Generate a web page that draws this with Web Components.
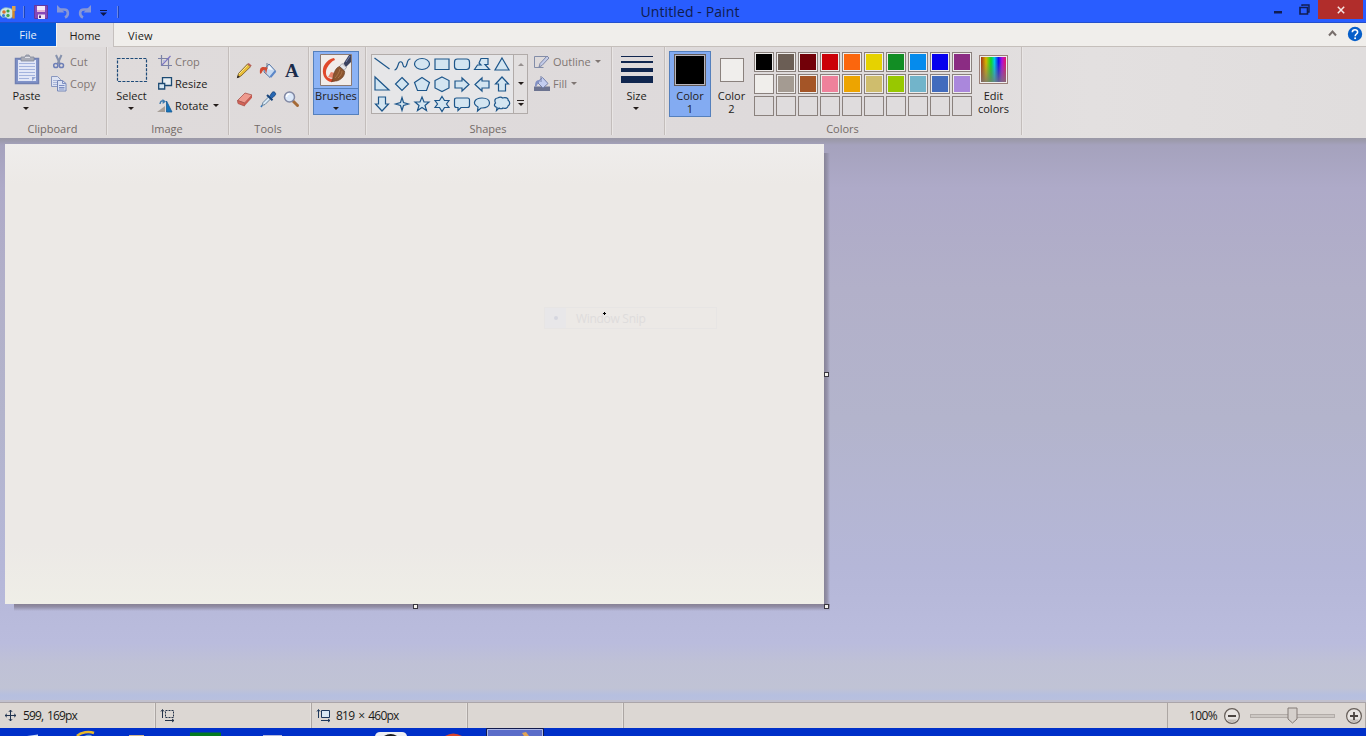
<!DOCTYPE html>
<html lang="en">
<head>
<meta charset="utf-8">
<title>Untitled - Paint</title>
<style>
  html, body { margin: 0; height: 100%; overflow: hidden; }
  body { font-family: "Open Sans", "Noto Sans", sans-serif; font-size: 11px; color: #231c1a; }
</style>
</head>
<body>
<paint-app></paint-app>

<script>
// [width, height, markup]
const ICONS = {
  palette: [18, 18, `<path d="M0 11c0-5 4-7 8-6 5 0 6 4 5 7-1 4-4 4-6 3-1-2-3 0-5-1-1-1-2-2-2-3z" fill="#cfe6e6" stroke="#8cbcc4" stroke-width=".8"/><circle cx="4" cy="9" r="1.800" fill="#d5732e"/><circle cx="8" cy="8" r="1.600" fill="#35a046"/><circle cx="3.500" cy="12.500" r="1.500" fill="#347bd2"/><circle cx="8" cy="12.500" r="1.700" fill="#48a850"/><path d="M13.500 5.500v10" stroke="#d58a29" stroke-width="2.400"/><path d="M12 3h3.500v5H12z" fill="#e0a44c"/>`],
  save: [14, 14, `<path d="M.5.500h13v13h-13z" fill="#8648b8" stroke="#64389c"/><path d="M3 1h8v6H3z" fill="#f4e9fa"/><path d="M3 5h8v2H3z" fill="#e4b6d6"/><path d="M4 9.500h7V14H4z" fill="#efe3f3"/><path d="M5 10.500h2V13H5z" fill="#553080"/>`],
  undo: [14, 14, `<path d="M3 4.500h5c5 0 5 6 1 8" fill="none" stroke="#8797d6" stroke-width="2.600"/><path d="M1 0v7.500h7.500z" fill="#8797d6"/>`],
  redo: [14, 14, `<path d="M11 4.500H6c-5 0-5 6-1 8" fill="none" stroke="#8797d6" stroke-width="2.600"/><path d="M13 0v7.500H5.500z" fill="#8797d6"/>`],
  more: [9, 7, `<path d="M1 .5h7" stroke="#0d1747"/><path d="M1 2.500h7L4.500 6z" fill="#0d1747"/>`],
  paste: [26, 32, `<path d="M1.500 4.500h23v25h-23z" fill="#8193c9" stroke="#7180b2" stroke-width="1.500"/><path d="M4 6h18v21H4z" fill="#e2e7f7"/><path d="M5 9.500h16M5 12.500h16M5 15.500h16M5 18.500h16M5 21.500h16M5 24.500h10" stroke="#a3b3de"/><path d="M18 27v-4h4z" fill="#94a6d6"/><path d="M7 3h4l1-2h3l1 2h4v4H7z" fill="#a9acb7" stroke="#838a9c" stroke-width=".8"/><path d="M11 3.500h5" stroke="#dfe0e8"/>`],
  cut: [15, 15, `<path d="M5 1l4 9M10.500 1l-4 9" stroke="#8792ad" stroke-width="2" fill="none"/><circle cx="4.800" cy="11.500" r="2.100" fill="none" stroke="#6e7fb7" stroke-width="1.500"/><circle cx="10.400" cy="11.500" r="2.100" fill="none" stroke="#6e7fb7" stroke-width="1.500"/>`],
  copy: [16, 16, `<path d="M.5.500h6l3 3v7h-9z" fill="#dee3f2" stroke="#8997bf"/><path d="M2 4.500h4M2 6.500h4M2 8.500h4" stroke="#a9b5d8"/><path d="M6.500 4.500h5l3.500 3V15H6.500z" fill="#dae1f3" stroke="#7788b8"/><path d="M11.500 4.500v3H15M8 9.500h5.500M8 11.500h5.500M8 13h5.500" stroke="#7c8ec2" fill="none"/>`],
  select: [30, 24, `<path d="M.5.500h29v23H.5z" fill="none" stroke="#1d4a78" stroke-width="1.200" stroke-dasharray="3 1.300"/>`],
  crop: [14, 14, `<path d="M3.500 0v10.500H14M0 3.500h10.500V14" fill="none" stroke="#7c83a7" stroke-width="1.200"/><path d="M4 10l8.500-9" stroke="#7d75c2" stroke-width="1.200"/><path d="M5 5h3L5 8z" fill="#b9bcdf"/>`],
  resize: [14, 14, `<path d="M4.500.700h9v7.800h-9z" fill="#e6edf1" stroke="#1c4a72" stroke-width="1.300"/><path d="M.7 6.500h6v5.500h-6z" fill="#d4e6f2" stroke="#1c4a72" stroke-width="1.300"/>`],
  rotate: [16, 14, `<path d="M-1 13h8V7z" fill="#a79f98"/><path d="M8.500 13V2l5.500 11z" fill="#1673bb" stroke="#155b94" stroke-width=".8"/><path d="M2 5c.5-3 2-3.500 3.500-3" fill="none" stroke="#3b79ae" stroke-width="1.400"/><path d="M4.500 0L8 2.500 4.700 5z" fill="#3b79ae"/>`],
  pencil: [18, 18, `<path d="M1.500 15.500l1-4L11.500 2l3 2.800L5 14z" fill="#e8bd38" stroke="#725525" stroke-width=".8"/><path d="M11.500 2l1.200-1 3 2.600-1.200 1.200z" fill="#b95f59"/><path d="M3 12l8.500-8.500" stroke="#f9e58e"/><path d="M.8 16.200l1-3L4 15z" fill="#2d2620"/>`],
  bucket: [18, 18, `<path d="M5.500 7L10 2l6.500 7-5.500 6.500L5 10z" fill="#c6d9f0" stroke="#5979a7"/><path d="M7 7l3.500-3.500L14 8z" fill="#f1f6fc"/><path d="M8 1v6" stroke="#6e7a8b"/><path d="M8.500 5.500L4.500 5C1.500 5 .500 7 1 11.500c1.500 1 2-2 3-3l2-1 1 5z" fill="#d34a31"/><path d="M11.500 15l5-6" stroke="#5c87c8" stroke-width="2"/>`],
  eraser: [18, 18, `<path d="M1.500 10.500L9 3l7 2-7.500 8z" fill="#ee9a8e" stroke="#a7544c" stroke-width=".8"/><path d="M1.500 10.500l7 2.500v3l-6.500-2.500z" fill="#d56357" stroke="#a7544c" stroke-width=".8"/><path d="M8.500 13L16 5v2.800L8.500 16z" fill="#c85a50"/>`],
  dropper: [18, 18, `<path d="M3 15.500l1-3 6-6 2 2-6 6z" fill="#d9eaf8" stroke="#5c7893" stroke-width=".9"/><path d="M8 5l5.500 5.200" stroke="#17437a" stroke-width="2"/><path d="M10.500 6.500l2.500-4c2-2 5 1 3 3l-3.500 3z" fill="#2767b3" stroke="#17437a" stroke-width=".8"/><path d="M2 17l1-1.500" stroke="#3077bc" stroke-width="1.500"/>`],
  lens: [18, 18, `<path d="M9.500 10.500l5 5" stroke="#a56a37" stroke-width="3" stroke-linecap="round"/><circle cx="6.500" cy="7" r="5" fill="#dbe8f9" stroke="#8289a4" stroke-width="1.500"/><path d="M3.500 7a3 3 0 0 1 3-3" stroke="#fff" stroke-width="1.400" fill="none"/>`],
  brush: [32, 32, `<path d="M.5.500h31v31H.5z" fill="#f1ece9" stroke="#8b7972"/><path d="M14 4C9 5 4 9 3 15c-1 7 3 12 8 13 5 0 7-3 9-6-4 2-8 4-11 2-3-1-4-6-2-10 2-4 5-7 8-8z" fill="#e0482a"/><path d="M11 18l4 1-2 5-5-1z" fill="#e8836a"/><path d="M23.500 9.500L29 1h2v7l-5 5z" fill="#39415f"/><path d="M26 8l4-6" stroke="#7482ad"/><path d="M22 9.500l4.500 4-2.500 3-4.500-4z" fill="#e3e4ea" stroke="#80808a" stroke-width=".6"/><path d="M19.500 12.500l5 4.500c1 4-3 9-8 10-2 0-4 0-5 1 2-3 1-6 3-10 1-3 3-5 5-5.500z" fill="#8c552e" stroke="#633b22" stroke-width=".6"/><path d="M15 24c2-2 4-5 5-9M18 24c2-2 4-4 4-7" stroke="#b27b4e" stroke-width=".8" fill="none"/>`],
  outline: [16, 14, `<path d="M.5 12.500v-11h12" fill="none" stroke="#838da8"/><path d="M.5 12.500h9" stroke="#838da8"/><path d="M5 12l1-3.500 7-7.500 2 2-7 7.500z" fill="#c3cbe7" stroke="#7780a0" stroke-width=".9"/>`],
  fill: [16, 15, `<path d="M0 10.500h16V15H0z" fill="#6c7390"/><path d="M4 5.500L8.500 1.500l5.500 6-5 4.500-5-5z" fill="#c3cdf0" stroke="#7581ac"/><path d="M7 0v6" stroke="#7581ac"/><path d="M6 4.500c-4-1-5 2-5 6 2 1 2-3 4-4z" fill="#8290c3"/>`],
  size: [32, 29, `<path d="M0 0h32v1H0zM0 5h32v2H0zM0 12h32v4H0zM0 20h32v7H0z" fill="#10264f"/>`],
  help: [16, 16, `<circle cx="8" cy="8" r="7.200" fill="#075fc9"/><path d="M5.300 6.200c.2-3.400 5.500-3.100 5.300 0-.1 1.800-2.400 1.900-2.400 4" fill="none" stroke="#fff" stroke-width="1.600"/><circle cx="8.100" cy="12.200" r="1" fill="#fff"/>`],
  chevron: [9, 7, `<path d="M1 5.500l3.500-4 3.500 4" fill="none" stroke="#776e6b" stroke-width="2"/>`],
  minimize: [8, 3, `<path d="M0 0h8v2.500H0z" fill="#101d52"/>`],
  restore: [11, 11, `<path d="M3 2V1h7v7H9" fill="none" stroke="#101d52" stroke-width="1.400"/><path d="M1 3.500h7.500V10H1z" fill="none" stroke="#101d52" stroke-width="1.600"/>`],
  close: [8, 8, `<path d="M.8.800l6.400 6.400M7.200.800L.8 7.200" stroke="#f6e4e2" stroke-width="1.500"/>`],
  move: [11, 11, `<path d="M5.500 0v11M0 5.500h11" stroke="#203450"/><path d="M3.800 2L5.500 0l1.700 2M3.800 9l1.700 2 1.700-2M2 3.800L0 5.500l2 1.700M9 3.800l2 1.700-2 1.700" fill="none" stroke="#203450" stroke-width=".9"/>`],
  selsize: [14, 13, `<path d="M1.500 1v8M0 2.500L1.500.500 3 2.500M4 11.500h9M11 10l2 1.500L11 13" fill="none" stroke="#243349"/><path d="M4.500 1.500h8v7h-8z" fill="none" stroke="#243349" stroke-dasharray="2 1"/>`],
  imgsize: [14, 13, `<path d="M1.500 1v8M0 2.500L1.500.500 3 2.500M4 11.500h9M11 10l2 1.500L11 13" fill="none" stroke="#1d385c"/><path d="M4.500 1.500h8v7h-8z" fill="#d9e7f3" stroke="#1d385c"/>`],
  minus: [18, 18, `<circle cx="9" cy="9" r="7.400" fill="#e8e4e1" stroke="#665e59" stroke-width="1.200"/><path d="M4 12.500h10a6 6 0 0 1-10 0z" fill="#c2bcb7"/><path d="M5 9h8" stroke="#4b4440" stroke-width="2"/>`],
  plus: [18, 18, `<circle cx="9" cy="9" r="7.400" fill="#e8e4e1" stroke="#665e59" stroke-width="1.200"/><path d="M4 12.500h10a6 6 0 0 1-10 0z" fill="#c2bcb7"/><path d="M5 9h8M9 5v8" stroke="#4b4440" stroke-width="1.800"/>`]
};

// outlines of the shapes gallery, each on a 20x20 cell
const SHAPES = [
  "M3 4l15 11", "M3 16c4 0 3-10 7-8 2 1 1 5 3 5 4 0 1-8 6-8",
  "M3 10a7.500 5.500 0 1 0 15 0a7.500 5.500 0 1 0-15 0z", "M3.500 5h14v10.500h-14z",
  "M6 5h9q3 0 3 3v4.500q0 3-3 3H6q-3 0-3-3V8q0-3 3-3z", "M3 15.500l3-4.500h3.500L7.500 9l2-4.500h7v6h-3l4.500 5z", "M10.500 4l7 12h-14z",
  "M3.500 3v13h14z", "M10.500 3.500l6.500 6.500-6.500 6.500L4 10z", "M10.500 3.500l7.500 5-3 8H6l-3-8z",
  "M10.500 3l7 3.500v7.500l-7 3.500-7-3.500V6.500z", "M3.500 7h7V4l7 6.500-7 6.500v-3h-7z",
  "M17.500 7h-7V4l-7 6.500 7 6.500v-3h7z", "M7 17V10H4l6.500-7L17 10h-3v7z",
  "M7 3v7H4l6.500 7 6.500-7h-3V3z", "M10.500 3.500l1.500 5 5 1.500-5 1.500-1.500 5L9 11.500 4 10l5-1.500z",
  "M10.500 3l2 5h5l-4 3.500 1.500 5-4.500-3-4.500 3L7.500 11.500 3.500 8h5z",
  "M10.500 2.500l2.500 4h4.500l-2.500 3.500 2.500 3.500H13l-2.500 4-2.500-4H3.500L6 10 3.500 6.500H8z",
  "M5 4h11q2 0 2 2v5.500q0 2-2 2H9.500l-3 3v-3H5q-2 0-2-2V6q0-2 2-2z",
  "M10.500 4c10 0 10 10 0 10h-1L6 17l.5-4C0 10 3 4 10.500 4z",
  "M6 4c2-1 4-1 5 0 3-1 6 0 5.500 2 2.500 2 2 5 0 6 0 2-3 3-5 2-1 1-3 1-4 0l-2.500 2.500.5-3C3 13 2 11 4 9 2.500 6 4 4 6 4z"
];

const COLORS = [
  "#000000", "#6b5e55", "#720008", "#cb0008", "#fb660d", "#e6d200", "#128d24", "#058bed", "#0600ee", "#8b2c83",
  "#f0eeeb", "#a49b92", "#a45527", "#ef819b", "#eda400", "#cfbd6d", "#98c800", "#72b4ca", "#426bbd", "#aa87dc",
  "", "", "", "", "", "", "", "", "", ""
];

function define(name, html) {
  customElements.define(name, class extends HTMLElement {
    constructor() {
      super();
      this.attachShadow({ mode: "open" });
    }
    connectedCallback() {
      const template = document.createElement("template");
      template.innerHTML = typeof html === "function" ? html(this) : html;
      this.shadowRoot.replaceChildren(template.content.cloneNode(true));
    }
  });
}

define("paint-icon", el => {
  const [w, h, body] = ICONS[el.getAttribute("name")];
  return `<style>:host { display: block; flex: none; width: ${w}px; height: ${h}px; } svg { display: block; overflow: visible; }</style>
    <svg width="${w}" height="${h}" viewBox="0 0 ${w} ${h}">${body}</svg>`;
});

define("drop-arrow", `
  <style>
    :host { display: block; width: 0; height: 0; border: 3px solid transparent; border-top-color: currentColor; border-bottom: 0; }
  </style>`);

define("title-bar", `
  <style>
    :host { display: grid; grid-template-columns: 1fr auto 1fr; height: 23px; box-sizing: border-box; background: #295dff; border-bottom: 1px solid #2450cc; }
    .quick { display: flex; align-items: center; height: 23px; }
    .bar { width: 1px; height: 12px; background: #6d87e6; box-shadow: 1px 0 #1b44bb; }
    h1 { margin: 0; padding-left: 14px; font: 14px/23px "Open Sans", sans-serif; letter-spacing: .1px; color: #101c4d; }
    .controls { display: flex; justify-content: flex-end; align-items: flex-start; padding-right: 3px; }
    .close { display: flex; align-items: center; justify-content: center; width: 45px; height: 19px; background: #b12d2b; margin-left: 8px; }
  </style>
  <div class="quick">
    <paint-icon name="palette"></paint-icon>
    <span class="bar" style="margin: 0 10px 0 5px"></span>
    <paint-icon name="save"></paint-icon>
    <paint-icon name="undo" style="margin-left: 8px"></paint-icon>
    <paint-icon name="redo" style="margin-left: 8px"></paint-icon>
    <paint-icon name="more" style="margin: 3px 9px 0 7px"></paint-icon>
    <span class="bar"></span>
  </div>
  <h1>Untitled - Paint</h1>
  <div class="controls">
    <paint-icon name="minimize" style="margin: 11px 17px 0 0"></paint-icon>
    <paint-icon name="restore" style="margin-top: 4px"></paint-icon>
    <div class="close"><paint-icon name="close"></paint-icon></div>
  </div>`);

define("tab-bar", `
  <style>
    :host { display: flex; height: 24px; background: #f0eeeb; line-height: 25px; }
    .file { width: 56px; height: 23px; line-height: 24px; text-align: center; background: #0459d6; color: #e7effa; }
    .home { width: 56px; text-align: center; background: #e2dfdf; border-left: 1px solid #f5f3f1; border-right: 1px solid #c5c0be; }
    .rest { flex: 1; display: flex; align-items: center; box-sizing: border-box; border-bottom: 1px solid #c5bfbb; padding: 0 3px 0 14px; gap: 10px; }
    .view { margin-right: auto; line-height: 23px; padding-top: 2px; letter-spacing: .2px; }
    paint-icon { margin-bottom: 2px; }
  </style>
  <div class="file">File</div>
  <div class="home">Home</div>
  <div class="rest">
    <span class="view">View</span>
    <paint-icon name="chevron"></paint-icon>
    <paint-icon name="help"></paint-icon>
  </div>`);

define("ribbon-group", el => `
  <style>
    :host { display: flex; flex-direction: column; flex: none; box-sizing: border-box; width: ${el.getAttribute("width")}px; height: 91px; padding-bottom: 3px; }
    .in { display: flex; flex-direction: column; flex: 1; border-right: 1px solid #c3bdbb; box-shadow: 1px 0 #e9e6e5; }
    .body { display: flex; height: 71px; align-items: flex-start; padding: 4px 0 0 ${el.getAttribute("inset") || 4}px; }
    .label { height: 13px; line-height: 14px; padding-right: 1px; text-align: center; color: #736a67; }
  </style>
  <div class="in">
    <div class="body"><slot></slot></div>
    <div class="label">${el.getAttribute("label") || ""}</div>
  </div>`);

define("big-button", el => `
  <style>
    :host { display: flex; flex-direction: column; align-items: center; flex: none; box-sizing: border-box; width: ${el.getAttribute("width")}px; height: 64px; border: 1px solid transparent; text-align: center; }
    :host([active]) { background: #83abf2; border-color: #5580bd; }
    :host([tall]) { height: 66px; }
    .pic { display: flex; align-items: center; justify-content: center; box-sizing: border-box; flex: none; height: 37px; align-self: stretch; padding-bottom: 1px; }
    :host([split]) .pic { border-bottom: 1px solid #5580bd; background: #8cb3f5; padding: 0; }
    .text { line-height: 13px; white-space: nowrap; }
    drop-arrow { margin: 5px 1px 0 0; }
  </style>
  <div class="pic"><slot></slot></div>
  <div class="text">${el.getAttribute("label").replace("|", "<br>")}</div>
  ${el.hasAttribute("arrow") ? "<drop-arrow></drop-arrow>" : ""}`);

define("small-button", el => `
  <style>
    :host { display: flex; align-items: center; box-sizing: border-box; height: 22px; padding-bottom: 1px; white-space: nowrap; }
    :host([disabled]) { color: #7f7673; }
    .pic { width: ${el.getAttribute("gap") || 19}px; }
    drop-arrow { margin-left: 4px; }
  </style>
  <div class="pic"><paint-icon name="${el.getAttribute("icon")}"></paint-icon></div>
  <slot></slot>
  ${el.hasAttribute("arrow") ? "<drop-arrow></drop-arrow>" : ""}`);

define("tool-grid", `
  <style>
    :host { display: grid; grid-template-columns: repeat(3, 23.500px); grid-auto-rows: 28px; place-items: center; padding-top: 6px; }
    b { font: bold 19px/20px "Liberation Serif", serif; color: #1b2c4b; }
  </style>
  <paint-icon name="pencil"></paint-icon>
  <paint-icon name="bucket"></paint-icon>
  <b>A</b>
  <paint-icon name="eraser"></paint-icon>
  <paint-icon name="dropper"></paint-icon>
  <paint-icon name="lens"></paint-icon>`);

define("shape-gallery", `
  <style>
    :host { display: flex; flex: none; box-sizing: border-box; width: 157px; height: 60px; margin-top: 3px; border: 1px solid #b1aba9; background: #e6e6e8; }
    .cells { display: grid; grid-template-columns: repeat(7, 20px); grid-auto-rows: 20px; width: 141px; }
    svg { display: block; fill: #d3e5f1; stroke: #1d568a; stroke-width: 1.200; }
    .open { fill: none; }
    .scroll { display: flex; flex-direction: column; flex: 1; border-left: 1px solid #b1aba9; background: #e2dfdf; }
    .scroll div { flex: 1; display: flex; flex-direction: column; align-items: center; justify-content: center; }
    .up { transform: scaleY(-1); color: #96908f; }
    .line { width: 7px; height: 1px; background: #2b2422; margin-bottom: 2px; }
  </style>
  <div class="cells">
    ${SHAPES.map((d, i) => `<svg class="${i < 2 ? "open" : ""}" width="20" height="20" viewBox=".5 1 20 20"><path d="${d}"/></svg>`).join("")}
  </div>
  <div class="scroll">
    <div><drop-arrow class="up"></drop-arrow></div>
    <div><drop-arrow></drop-arrow></div>
    <div><span class="line"></span><drop-arrow></drop-arrow></div>
  </div>`);

define("color-swatch", el => {
  const size = el.getAttribute("size") || 20;
  return `
  <style>
    :host { display: block; box-sizing: border-box; width: ${size}px; height: ${size}px; border: 1px solid #8a817d; padding: 1px; background: #efedec; }
    :host([empty]) { background: #dfdcdd; }
    :host([thick]) { border-color: #625a59; padding: 1px; background: #b8b6bd; }
    div { height: 100%; background: ${el.getAttribute("color") || "transparent"}; }
  </style>
  <div></div>`;
});

define("color-palette", `
  <style>
    :host { display: grid; grid-template-columns: repeat(10, 20px); grid-auto-rows: 20px; gap: 2px; margin: 1px 0 0 3px; }
  </style>
  ${COLORS.map(c => `<color-swatch color="${c}" ${c ? "" : "empty"}></color-swatch>`).join("")}`);

define("color-spectrum", `
  <style>
    :host { display: block; box-sizing: border-box; width: 29px; height: 29px; border: 1px solid #9a8078; padding: 1px; background: #eee; margin-bottom: 1px; }
    div { height: 100%; background: linear-gradient(#77777700 20%, #777777cc), linear-gradient(90deg, #a03418, #d8b400 20%, #10d820 40%, #00c8e6 54%, #1010f0 70%, #b010d8 84%, #e01860); }
  </style>
  <div></div>`);

define("ribbon-bar", `
  <style>
    :host { display: flex; height: 91px; background: linear-gradient(90deg, #dfdbdb, #dedadb 60%, #e3e0e0 80%, #e0dddd); }
    .col { display: flex; flex-direction: column; }
  </style>
  <ribbon-group width="107" label="Clipboard">
    <big-button width="45" label="Paste" arrow><paint-icon name="paste"></paint-icon></big-button>
    <div class="col" style="padding-left: 2px">
      <small-button icon="cut" disabled>Cut</small-button>
      <small-button icon="copy" disabled>Copy</small-button>
    </div>
  </ribbon-group>
  <ribbon-group width="122" label="Image" inset="2">
    <big-button width="45" label="Select" arrow><paint-icon name="select"></paint-icon></big-button>
    <div class="col" style="padding-left: 4px">
      <small-button icon="crop" gap="17" disabled>Crop</small-button>
      <small-button icon="resize" gap="17">Resize</small-button>
      <small-button icon="rotate" gap="17" arrow>Rotate</small-button>
    </div>
  </ribbon-group>
  <ribbon-group width="80" label="Tools">
    <tool-grid></tool-grid>
  </ribbon-group>
  <ribbon-group width="57">
    <big-button width="46" label="Brushes" arrow active split><paint-icon name="brush"></paint-icon></big-button>
  </ribbon-group>
  <ribbon-group width="246" label="Shapes" inset="5">
    <shape-gallery></shape-gallery>
    <div class="col" style="padding-left: 6px">
      <small-button icon="outline" disabled arrow>Outline</small-button>
      <small-button icon="fill" disabled arrow>Fill</small-button>
    </div>
  </ribbon-group>
  <ribbon-group width="53" inset="2">
    <big-button width="45" label="Size" arrow><paint-icon name="size"></paint-icon></big-button>
  </ribbon-group>
  <ribbon-group width="357" label="Colors">
    <big-button width="42" label="Color|1" active tall><color-swatch size="32" color="#000" thick></color-swatch></big-button>
    <big-button width="41" label="Color|2" tall><color-swatch size="24" color="#f0eeec"></color-swatch></big-button>
    <color-palette style="margin-left: 2px"></color-palette>
    <big-button width="43" label="Edit|colors" tall><color-spectrum></color-spectrum></big-button>
  </ribbon-group>`);

define("work-area", `
  <style>
    :host { display: block; flex: 1; box-sizing: border-box; padding: 6px 0 0 5px; overflow: hidden;
      background: linear-gradient(#9a98a6 0, #9d9bad 3px, #a5a2bd 7px, #aeaac8 50px, #b2b0c9 150px, #b3b4cc 280px, #b5b7d8 430px, #babcdd 505px, #bfc1d6 525px, #c0c3d5 550px, #b6bfdf 557px, #b9c0de 100%); }
    .sheet { position: relative; width: 819px; height: 460px; background: linear-gradient(#efedec, #ece9e6 40px, #ece9e6 400px, #efeee7); }
    .below, .side { position: absolute; }
    .below { left: 9px; top: 100%; width: 816px; height: 7px; background: linear-gradient(#878194, #918da5 40%, #b5b6d800); }
    .side { left: 100%; top: 9px; width: 6px; height: 455px; background: linear-gradient(90deg, #878397, #9592aa 50%, #b1b0ca00); }
    i { position: absolute; box-sizing: border-box; width: 5px; height: 5px; border: 1px solid #39363f; background: #f5f3ef; }
    .snip { position: absolute; left: 539px; top: 163px; display: flex; align-items: center; width: 173px; height: 22px; border: 1px solid #e7e5e4; box-sizing: border-box; color: #dedcdc; font-size: 12px; letter-spacing: -.3px; }
    .dot { display: flex; align-items: center; justify-content: center; width: 21px; height: 20px; background: #e8e7e9; margin-right: 10px; }
    .dot::before { content: ""; width: 4px; height: 4px; border-radius: 50%; background: #d5d6df; }
    .cursor { position: absolute; left: 598px; top: 168px; }
  </style>
  <div class="sheet">
    <div class="below"></div><div class="side"></div>
    <div class="snip"><span class="dot"></span>Window Snip</div>
    <svg class="cursor" width="3" height="3"><path d="M1 0h1v3H1zM0 1h3v1H0z"/></svg>
    <i style="left: 819px; top: 228px"></i>
    <i style="left: 408px; top: 460px"></i>
    <i style="left: 819px; top: 460px"></i>
  </div>`);

define("status-bar", `
  <style>
    :host { display: flex; height: 26px; box-sizing: border-box; border-top: 1px solid #aaa5aa; background: #dcd7d3; box-shadow: 0 -2px #c1c0cd; color: #201b19; font-size: 12px; letter-spacing: -.85px; word-spacing: 1.500px; position: relative; }
    .pane { display: flex; align-items: center; box-sizing: border-box; width: 156px; padding-left: 5px; gap: 7px; border-right: 1px solid #aca6a3; box-shadow: inset -1px 0 #e5e1de; }
    .pane:first-child { padding-left: 4px; gap: 6px; }
    .zoom { display: flex; align-items: center; margin-left: auto; width: 199px; box-sizing: border-box; border-left: 1px solid #aca6a3; border-right: 1px solid #aca6a3; padding-left: 21px; letter-spacing: -.6px; }
    .zoom span { width: 34px; }
    .track { display: flex; align-items: center; justify-content: center; width: 85px; height: 4px; box-sizing: border-box; border: 1px solid #b2aca8; background: #cdc8c4; margin: 0 10px 0 9px; }
  </style>
  <div class="pane"><paint-icon name="move"></paint-icon>599, 169px</div>
  <div class="pane"><paint-icon name="selsize"></paint-icon></div>
  <div class="pane" style="gap: 5px; letter-spacing: -.75px"><paint-icon name="imgsize"></paint-icon>819 × 460px</div>
  <div class="pane"></div>
  <div class="zoom">
    <span>100%</span>
    <paint-icon name="minus"></paint-icon>
    <div class="track">
      <svg width="11" height="17" style="flex: none"><path d="M1 1h9v11l-4.500 4L1 12z" fill="#d5d0cc" stroke="#837b76"/></svg>
    </div>
    <paint-icon name="plus"></paint-icon>
  </div>`);

// only the top edge of the taskbar is on screen
define("task-bar", `
  <style>:host { display: block; height: 8px; background: #0030c9; } svg { display: block; }</style>
  <svg width="1366" height="8" viewBox="0 0 1366 8">
    <path d="M27 8l11-1.500V8z" fill="#cfe0f8"/>
    <path d="M77 8c4-4 12-5 17-3" fill="none" stroke="#e7b92c" stroke-width="2.500"/><path d="M84 8c3-1 6-2 8 0z" fill="#6aa7dc"/>
    <path d="M129 7h15v1h-15z" fill="#cfb690"/>
    <path d="M190 4.500h31V8h-31z" fill="#047a20"/>
    <path d="M263 7h19v1h-19z" fill="#b2b8dd"/>
    <path d="M375 8q1-4 5-4h22q4 0 5 4z" fill="#eef0f4"/><path d="M384 8q7-4 13 0z" fill="#17191d"/>
    <path d="M445 8q8-5 17 0z" fill="#d6442d"/>
    <path d="M486.500 8V.500h57V8" fill="#5b6dc9" stroke="#111a4e"/><path d="M487.500 8V1.500h55V8" fill="none" stroke="#aeb8e5"/>
    <path d="M522 5l4-1 3 4h-5z" fill="#e0a456"/>
  </svg>`);

define("paint-app", `
  <style>:host { display: flex; flex-direction: column; width: 1366px; height: 736px; }</style>
  <title-bar></title-bar>
  <tab-bar></tab-bar>
  <ribbon-bar></ribbon-bar>
  <work-area></work-area>
  <status-bar></status-bar>
  <task-bar></task-bar>`);
</script>
</body>
</html>
